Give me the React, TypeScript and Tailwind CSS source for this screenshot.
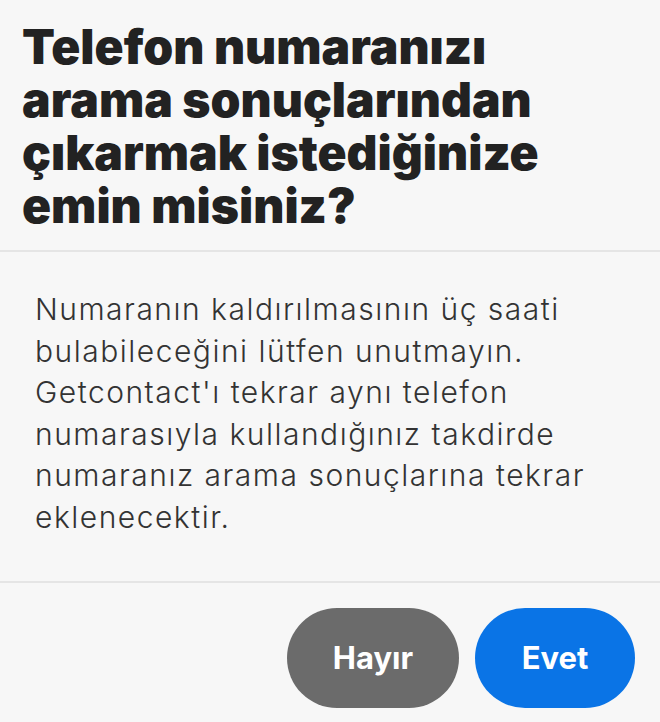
export default function App() {
  return (
    <div className="flex h-[722px] w-[660px] flex-col bg-[#f7f7f7] text-[#222222]" style={{ fontFamily: "Inter, 'Noto Sans', sans-serif" }}>
      <header className="border-b-2 border-[#e5e5e5] px-[22px] pt-[20px] pb-[18px]">
        <h1 className="text-[48px] font-black leading-[53px] text-[#222222]">
          Telefon numaranızı
          <br />
          arama sonuçlarından
          <br />
          çıkarmak istediğinize
          <br />
          emin misiniz?
        </h1>
      </header>

      <section className="border-b-2 border-[#e5e5e5] px-[35px] pt-[37px] pb-[43px]">
        <p className="text-[30px] font-light leading-[41.5px] tracking-[0.05em] text-[#333333]">
          Numaranın kaldırılmasının üç saati
          <br />
          bulabileceğini lütfen unutmayın.
          <br />
          Getcontact'ı tekrar aynı telefon
          <br />
          numarasıyla kullandığınız takdirde
          <br />
          numaranız arama sonuçlarına tekrar
          <br />
          eklenecektir.
        </p>
      </section>

      <footer className="flex justify-end gap-[16px] px-[25px] pt-[25px]">
        <button className="h-[100px] w-[172px] rounded-full bg-[#6b6b6b] text-[31px] font-bold text-white">Hayır</button>
        <button className="h-[100px] w-[160px] rounded-full bg-[#0a74e6] text-[31px] font-bold text-white">Evet</button>
      </footer>
    </div>
  );
}
